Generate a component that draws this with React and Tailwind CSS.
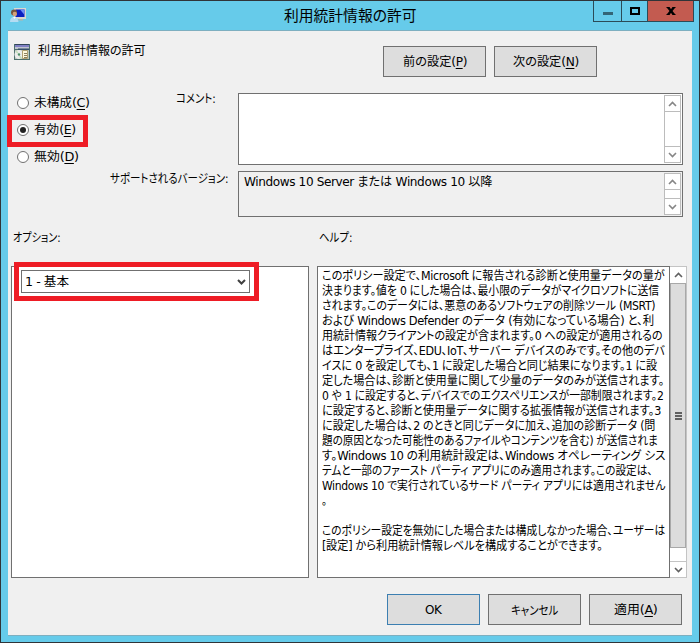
import { useLayoutEffect, useRef, useState } from 'react'

const helpLines = [
  ['このポリシー設定で、Microsoft に報告される診断と使用量データの量が', 343],
  ['決まります。値を 0 にした場合は、最小限のデータがマイクロソフトに送信', 337],
  ['されます。このデータには、悪意のあるソフトウェアの削除ツール (MSRT)', 333],
  ['および Windows Defender のデータ (有効になっている場合) と、利', 332],
  ['用統計情報クライアントの設定が含まれます。0 への設定が適用されるの', 341],
  ['はエンタープライズ、EDU、IoT、サーバー デバイスのみです。その他のデバ', 343],
  ['イスに 0 を設定しても、1 に設定した場合と同じ結果になります。1 に設', 335],
  ['定した場合は、診断と使用量に関して少量のデータのみが送信されます。', 342],
  ['0 や 1 に設定すると、デバイスでのエクスペリエンスが一部制限されます。2', 342],
  ['に設定すると、診断と使用量データに関する拡張情報が送信されます。3', 339],
  ['に設定した場合は、2 のときと同じデータに加え、追加の診断データ (問', 333],
  ['題の原因となった可能性のあるファイルやコンテンツを含む) が送信されま', 336],
  ['す。Windows 10 の利用統計設定は、Windows オペレーティング シス', 343],
  ['テムと一部のファースト パーティ アプリにのみ適用されます。この設定は、', 331],
  ['Windows 10 で実行されているサード パーティ アプリには適用されません', 343],
  ['。', 5],
  ['', 0],
  ['このポリシー設定を無効にした場合または構成しなかった場合、ユーザーは', 343],
  ['[設定] から利用統計情報レベルを構成することができます。', 281],
]

// Latin runs use a wider face, set slightly tight
function Mixed({ text }) {
  return text.split(/([\x20-\x7e]+)/).map((part, i) =>
    i % 2 ? (
      <span key={i} className="font-['DejaVu_Sans',sans-serif] text-[12px] tracking-[-0.4px]">
        {part}
      </span>
    ) : (
      part
    ),
  )
}

// One line of text squeezed or stretched to a given width
function Fit({ width, children }) {
  const ref = useRef(null)
  const [scale, setScale] = useState(1)

  useLayoutEffect(() => {
    const measure = () => {
      const natural = ref.current?.offsetWidth
      if (natural) setScale(width / natural)
    }
    measure()
    document.fonts?.ready.then(measure)
  }, [width])

  return (
    <span
      ref={ref}
      className="inline-block origin-left whitespace-pre align-top"
      style={{ transform: `scaleX(${scale})` }}
    >
      {children}
    </span>
  )
}

function Chevron({ up, color = 'stroke-[#868686]' }) {
  return (
    <svg width="9" height="6" viewBox="0 0 9 6" fill="none" className={color} strokeWidth="1.6">
      <path d={up ? 'M1 5 4.5 1.5 8 5' : 'M1 1 4.5 4.5 8 1'} />
    </svg>
  )
}

function SmallScrollbar() {
  return (
    <div className="flex w-[17px] flex-col justify-between border border-[#bcbcbc] bg-white">
      <div className="flex h-4 items-center justify-center border-b border-[#bcbcbc]">
        <Chevron up />
      </div>
      <div className="flex h-4 items-center justify-center border-t border-[#bcbcbc]">
        <Chevron />
      </div>
    </div>
  )
}

function Label({ text, accessKey, width }) {
  return (
    <div style={{ width }}>
      <Fit width={width}>
        <Mixed text={text} />
        {accessKey && (
          <span className="font-['DejaVu_Sans',sans-serif] text-[12px] tracking-[-0.4px]">
            (<span className="underline underline-offset-2">{accessKey}</span>)
          </span>
        )}
      </Fit>
    </div>
  )
}

function Button({ label, accessKey, className, textWidth, primary }) {
  return (
    <div
      className={`flex h-[31px] items-center justify-center border bg-[#dddddd] ${className} ${
        primary ? 'border-[#3c7fb1]' : 'border-[#707070]'
      }`}
    >
      <Label text={label} accessKey={accessKey} width={textWidth} />
    </div>
  )
}

function Radio({ text, accessKey, width, checked }) {
  return (
    <div className="flex h-[27px] items-center gap-[5px]">
      <div className="flex size-3 items-center justify-center rounded-full border border-[#707070] bg-white">
        {checked && <div className="size-1.5 rounded-full bg-[#222222]" />}
      </div>
      <Label text={text} accessKey={accessKey} width={width} />
    </div>
  )
}

function UserMonitorIcon() {
  return (
    <svg width="16" height="16" viewBox="0 0 16 16">
      <path d="M4 0h12v11H4z" fill="#d9d8cf" />
      <path d="M5.500 1.500h9V9h-9z" fill="#0a1fc0" />
      <path d="M10 1.500h4.500V7z" fill="#6f8df5" />
      <path d="M9 11h4v1.500H8z" fill="#b5b5aa" />
      <circle cx="4" cy="4.500" r="3" fill="#76553d" />
      <circle cx="4.800" cy="6" r="2.200" fill="#d2a17a" />
      <path d="M0 14q0-5 4-5t4.500 5z" fill="#b4dcf2" />
      <path d="m3 9 1.500 2L6 9z" fill="#f5fbff" />
    </svg>
  )
}

function PolicyIcon() {
  return (
    <svg width="16" height="16" viewBox="0 0 16 16">
      <path d="M0 0h16v16H0z" fill="#4d6e6c" />
      <path d="M1 0h14v1H1z" fill="#31455a" />
      <path d="M1 1h14v2H1z" fill="#8080c4" />
      <path d="M1 3h14v2H1z" fill="#c0c4d0" />
      <path d="M4 4.500h11v1.500H4z" fill="#35506a" />
      <path d="M1 6h14v9H1z" fill="#b9c6bd" />
      <circle cx="5" cy="10.500" r="4.500" fill="#ececec" />
      <path d="M5 10.500 1.500 8 3 6.500zM5 10.500 8 14l-2 1z" fill="#c3dfb8" />
      <circle cx="5" cy="10.500" r="1.200" fill="#4f8f6a" />
      <path d="M8.500 6.500h5v8h-5z" fill="#fff8dc" stroke="#b0a070" />
      <path d="M10 9.500h3m-3 2h3m-3 2h3" stroke="#8c8060" />
    </svg>
  )
}

function TitleBar() {
  return (
    <div className="flex h-[29px]">
      <div className="w-[283px] pl-[9px] pt-[7px]">
        <UserMonitorIcon />
      </div>
      <div className="w-[132px] pt-[3px] text-[15px] leading-[22px]">
        <Fit width={132}>利用統計情報の許可</Fit>
      </div>
      <div className="ml-auto mr-[5px] flex h-[21px] w-[101px] border border-t-0 border-[#2b4b57]">
        <div className="flex w-[28px] justify-center border-r border-[#2b4b57] pt-[11px]">
          <div className="h-[3px] w-2.5 bg-[#336576]" />
        </div>
        <div className="flex w-[26px] justify-center border-r border-[#2b4b57] pt-[6px]">
          <div className="h-2 w-2.5 border-2 border-black" />
        </div>
        <div className="flex flex-1 justify-center bg-[#c35b50] pt-[6px]">
          <svg width="10" height="8" viewBox="0 0 10 8" stroke="black" strokeWidth="2.400">
            <path d="m1.800 0 6.400 8m0-8L1.800 8" />
            <path d="M.5.500h3m3 0h3m-9 7h3m3 0h3" strokeWidth="1" />
          </svg>
        </div>
      </div>
    </div>
  )
}

function HelpScrollbar() {
  return (
    <div className="flex w-[17px] flex-col border border-l-0 border-[#c4c4c4] bg-white">
      <div className="flex h-4 items-center justify-center">
        <Chevron up color="stroke-[#606060]" />
      </div>
      <div className="flex h-[265px] flex-col items-center justify-center gap-px border border-[#a8a8a8] bg-[#dcdcdc]">
        <div className="h-0.5 w-[7px] bg-[#606060]" />
        <div className="h-0.5 w-[7px] bg-[#606060]" />
        <div className="h-0.5 w-[7px] bg-[#606060]" />
      </div>
      <div className="flex-1" />
      <div className="flex h-4 items-center justify-center border-t border-[#c4c4c4]">
        <Chevron color="stroke-[#606060]" />
      </div>
    </div>
  )
}

function App() {
  return (
    <div
      lang="ja"
      className="h-[643px] w-[700px] overflow-hidden border border-[#303438] bg-[#66cbea] font-['Noto_Sans_CJK_JP',sans-serif] text-[12px] leading-[15px] text-black [font-feature-settings:'palt']"
    >
      <TitleBar />
      <div className="mx-[7px] h-[606px] w-[684px] border-y border-[#7eafc0] bg-[#f0f0f0]">
        <div className="flex h-[62px] pl-1.5 pt-[14px]">
          <div className="-mt-px">
            <PolicyIcon />
          </div>
          <div className="-mt-[3px] ml-2 w-[345px]">
            <Fit width={108}>利用統計情報の許可</Fit>
          </div>
          <div className="flex gap-2 pt-px">
            <Button label="前の設定" accessKey="P" className="w-[103px]" textWidth={64} />
            <Button label="次の設定" accessKey="N" className="w-[103px]" textWidth={66} />
          </div>
        </div>

        <div className="flex h-[138px]">
          <div className="relative -mt-1 w-[93px] shrink-0 pl-[9px]">
            <Radio text="未構成" accessKey="C" width={56} />
            <Radio text="有効" accessKey="E" width={42} checked />
            <Radio text="無効" accessKey="D" width={44} />
            <div className="absolute -left-px top-[26px] h-8 w-[81px] border-[5px] border-[#ee1c25]" />
          </div>
          <div className="-mt-[3px] flex w-[127px] shrink-0 flex-col gap-[63px]">
            <div className="pl-[75px]">
              <Label text="コメント:" width={39} />
            </div>
            <div className="pl-[9px]">
              <Label text="サポートされるバージョン:" width={118} />
            </div>
          </div>
          <div className="ml-[10px] w-[445px] space-y-1.5">
            <div className="flex h-[72px] justify-end border border-[#707070] bg-white p-px">
              <SmallScrollbar />
            </div>
            <div className="flex h-[46px] justify-between border border-[#707070] p-px">
              <div className="pl-1">
                <Fit width={248}>
                  <Mixed text="Windows 10 Server または Windows 10 以降" />
                </Fit>
              </div>
              <SmallScrollbar />
            </div>
          </div>
        </div>

        <div className="flex h-[35px] pl-[5px]">
          <div className="-mt-0.5 w-[306px]">
            <Label text="オプション:" width={47} />
          </div>
          <div className="-mt-0.5">
            <Label text="ヘルプ:" width={33} />
          </div>
        </div>

        <div className="flex h-[312px] pl-[3px]">
          <div className="relative mr-2 w-[298px] border border-[#707070] bg-white pl-[9px] pt-[3px]">
            <div className="flex h-[23px] w-[229px] items-center justify-between border border-[#707070] pl-[3px] pr-[3px]">
              <Label text="1 - 基本" width={44} />
              <svg width="9" height="6" viewBox="0 0 9 6" fill="none" stroke="#404040" strokeWidth="2">
                <path d="M1 1 4.5 4.5 8 1" />
              </svg>
            </div>
            <div className="absolute -top-[5px] left-[2px] h-[39px] w-[245px] border-[5px] border-[#ee1c25]" />
          </div>
          <div className="w-[353px] border border-[#707070] bg-white pl-1">
            {helpLines.map(([text, width], i) => (
              <div key={i} className="h-[15px]">
                <Fit width={width}>
                  <Mixed text={text} />
                </Fit>
              </div>
            ))}
          </div>
          <HelpScrollbar />
        </div>

        <div className="flex justify-end gap-2 pr-[10px] pt-4">
          <Button label="OK" className="w-[93px]" textWidth={17} primary />
          <Button label="キャンセル" className="w-[93px]" textWidth={47} />
          <Button label="適用" accessKey="A" className="w-[93px]" textWidth={43} />
        </div>
      </div>
    </div>
  )
}

export default App
